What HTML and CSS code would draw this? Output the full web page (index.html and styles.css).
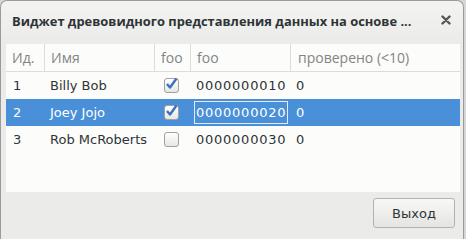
FILE: index.html
```html
<!DOCTYPE html>
<html>
<head>
<meta charset="utf-8">
<link rel="stylesheet" href="styles.css">
</head>
<body>
<div class="window">
  <div class="titlebar">
    <div class="title">Виджет древовидного представления данных на основе ...</div>
    <svg class="close" width="10" height="10" viewBox="0 0 10 10"><path d="M1.5 1.5 L8.5 8.5 M8.5 1.5 L1.5 8.5" stroke="#555753" stroke-width="2.4" stroke-linecap="round"/></svg>
  </div>
  <div class="tree">
    <div class="row head">
      <div class="hc c1">Ид.</div>
      <div class="hc c2">Имя</div>
      <div class="hc c3">foo</div>
      <div class="hc c4">foo</div>
      <div class="hc c5">проверено (&lt;10)</div>
    </div>
    <div class="row">
      <div class="c c1">1</div>
      <div class="c c2">Billy Bob</div>
      <div class="c c3"><span class="check on"><svg width="14" height="14" viewBox="0 0 14 14"><path d="M3 7 L6 10.5 L12.5 1.5" stroke="#3b72c0" stroke-width="2.4" fill="none" stroke-linejoin="round"/></svg></span></div>
      <div class="c c4"><span class="num">0000000010</span></div>
      <div class="c c5">0</div>
    </div>
    <div class="row sel">
      <div class="c c1">2</div>
      <div class="c c2">Joey Jojo</div>
      <div class="c c3"><span class="check on"><svg width="14" height="14" viewBox="0 0 14 14"><path d="M3 7 L6 10.5 L12.5 1.5" stroke="#3b72c0" stroke-width="2.4" fill="none" stroke-linejoin="round"/></svg></span></div>
      <div class="c c4"><span class="num edit">0000000020</span></div>
      <div class="c c5">0</div>
    </div>
    <div class="row">
      <div class="c c1">3</div>
      <div class="c c2">Rob McRoberts</div>
      <div class="c c3"><span class="check"></span></div>
      <div class="c c4"><span class="num">0000000030</span></div>
      <div class="c c5">0</div>
    </div>
  </div>
  <div class="actions">
    <button class="btn">Выход</button>
  </div>
</div>
</body>
</html>
```

FILE: styles.css
```css
html, body {
  margin: 0;
  padding: 0;
  background: #d6d6d4;
  width: 466px;
  height: 239px;
  overflow: hidden;
}
.window {
  width: 462px;
  height: 238px;
  background: #ebebe9;
  border: 1px solid #9b9b99;
  border-bottom: none;
  border-radius: 7px 7px 0 0;
  font-family: "DejaVu Sans", sans-serif;
  font-size: 13px;
  color: #2e3436;
  overflow: hidden;
}
.titlebar {
  height: 43px;
  display: flex;
  align-items: flex-start;
  justify-content: space-between;
  background: linear-gradient(#f3f3f1, #ebebe9);
  border-radius: 7px 7px 0 0;
}
.title {
  font-family: "Open Sans", sans-serif;
  font-weight: bold;
  font-size: 12.9px;
  line-height: 18px;
  margin: 11px 0 0 11px;
  color: #2e3436;
}
.close {
  margin: 14px 12px 0 0;
}
.tree {
  margin-left: 5px;
  width: 454px;
  height: 148px;
  background: #fcfcfb;
}
.row {
  display: grid;
  grid-template-columns: 38px 110px 36px 100px 1fr;
  height: 27px;
  align-items: center;
}
.row.head {
  height: 27px;
  border-bottom: 1px solid #dcdcd9;
  align-items: stretch;
}
.hc {
  font-family: "Open Sans", sans-serif;
  font-size: 14px;
  color: #838582;
  display: flex;
  align-items: center;
  padding-left: 6px;
}
.hc.c2, .hc.c3, .hc.c4, .hc.c5 {
  border-left: 1px solid #dcdcd9;
}
.hc.c3 { padding-left: 6px; }
.hc.c5 { padding-left: 7px; }
.c {
  height: 27px;
  display: flex;
  align-items: center;
  white-space: nowrap;
}
.c.c1 { padding-left: 7px; }
.c.c2 { padding-left: 6px; }
.c.c3 { padding-left: 10px; }
.c.c4 { padding-left: 4px; }
.c.c5 { padding-left: 6px; }
.row.sel {
  background: #4a90d9;
  color: #ffffff;
}
.check {
  position: relative;
  width: 13px;
  height: 13px;
  border: 1px solid #a1a19d;
  border-radius: 3px;
  background: linear-gradient(#ffffff, #e6e6e3);
}
.check svg {
  position: absolute;
  left: -1px;
  top: -2px;
}
.num {
  border: 1px solid transparent;
  padding: 2px 1px 2px 1px;
  line-height: 17px;
  letter-spacing: 0.75px;
}
.num.edit {
  border-color: #e4ecf6;
}
.actions {
  display: flex;
  justify-content: flex-end;
  padding: 6px 8px 0 0;
}
.btn {
  width: 82px;
  height: 30px;
  font-family: "DejaVu Sans", sans-serif;
  font-size: 13px;
  color: #2e3436;
  border: 1px solid #b3b3ae;
  border-radius: 3px;
  background: linear-gradient(#f8f8f7, #e4e4e1);
  padding: 0;
}
```
